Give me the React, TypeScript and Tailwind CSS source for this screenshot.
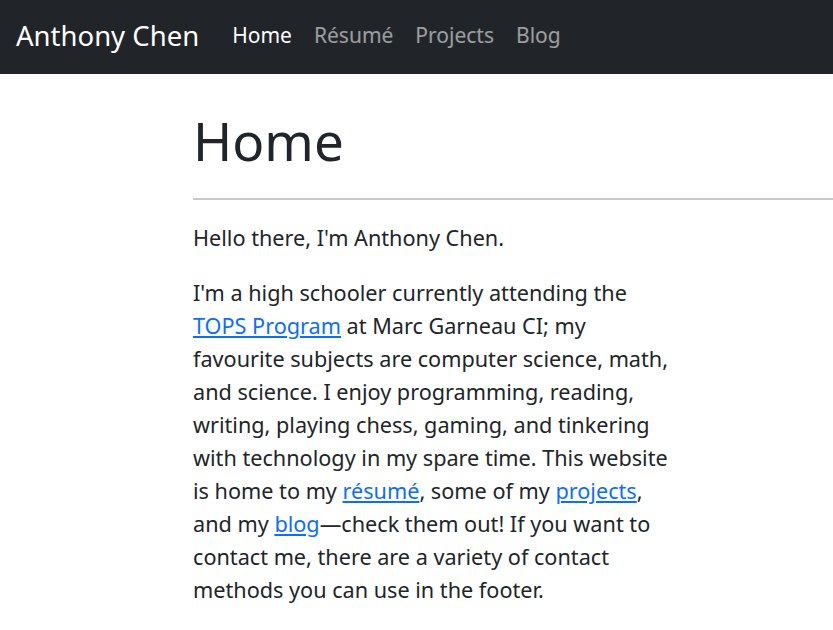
import React from "react";

const links = ["Home", "Résumé", "Projects", "Blog"];

export default function App() {
  return (
    <div className="min-h-screen bg-white text-[#212529] font-['Noto_Sans',sans-serif] overflow-hidden">
      <nav className="h-[74px] bg-[#212529] flex items-center pl-4 pb-[3px]">
        <a href="#" className="text-[27.5px] text-white mr-[22px] leading-none">
          Anthony Chen
        </a>
        <ul className="flex items-center">
          {links.map((l, i) => (
            <li key={l}>
              <a
                href="#"
                className={`block px-[11px] text-[21px] leading-none ${i === 0 ? "text-white" : "text-white/55"}`}
              >
                {l}
              </a>
            </li>
          ))}
        </ul>
      </nav>

      <main className="ml-[193px]">
        <h1 className="mt-[34px] text-[53px] leading-[66px] font-normal">Home</h1>
        <hr className="mt-[24px] border-0 h-[2px] bg-[#c8c8c8]" />
        <div className="w-[484px] text-[21.65px] leading-[33px] mt-[21px]">
          <p>Hello there, I'm Anthony Chen.</p>
          <p className="mt-[22px]">
            I'm a high schooler currently attending the{" "}
            <a href="#" className="text-[#0d6efd] underline">TOPS Program</a> at Marc Garneau CI; my
            favourite subjects are computer science, math, and science. I enjoy programming, reading,
            writing, playing chess, gaming, and tinkering with technology in my spare time. This website
            is home to my <a href="#" className="text-[#0d6efd] underline">résumé</a>, some of my{" "}
            <a href="#" className="text-[#0d6efd] underline">projects</a>, and my{" "}
            <a href="#" className="text-[#0d6efd] underline">blog</a>—check them out! If you want to
            contact me, there are a variety of contact methods you can use in the footer.
          </p>
        </div>
      </main>
    </div>
  );
}
